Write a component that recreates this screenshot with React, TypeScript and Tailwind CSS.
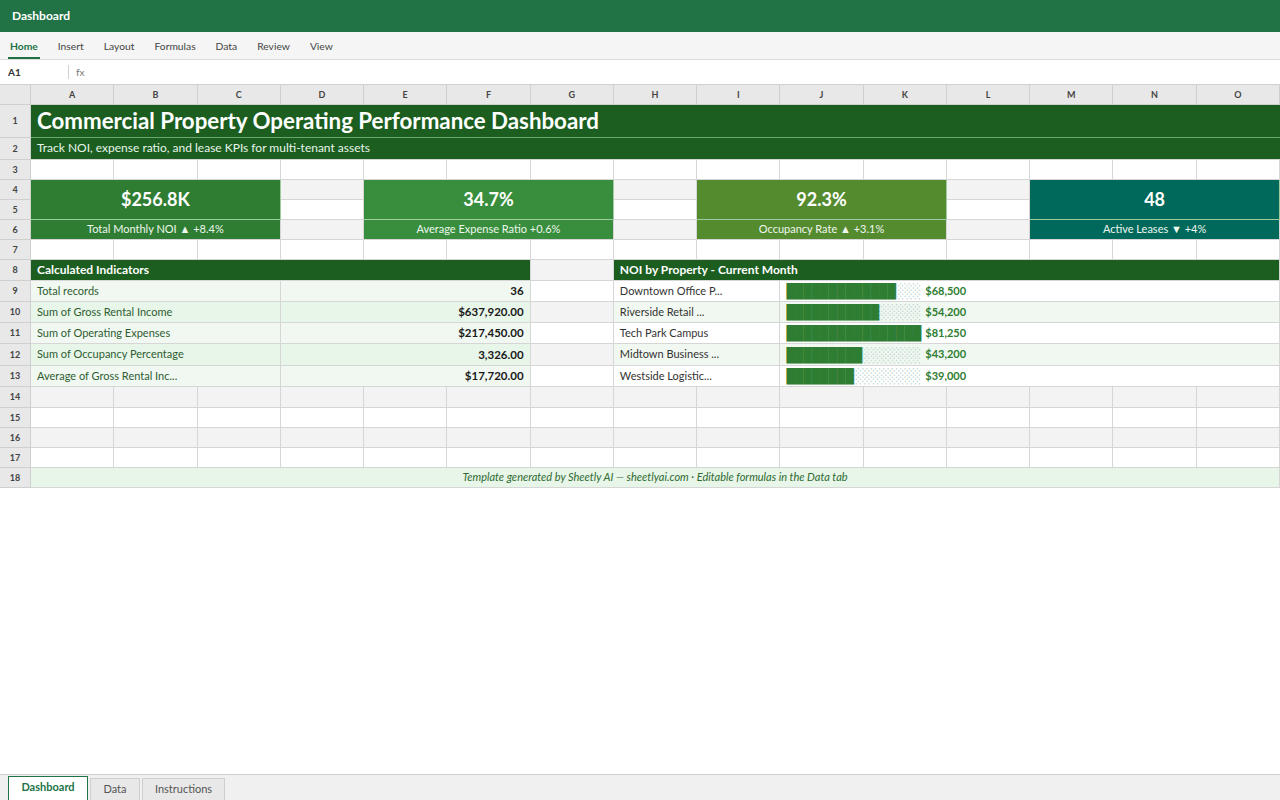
import React from "react";

const COLS = ["A", "B", "C", "D", "E", "F", "G", "H", "I", "J", "K", "L", "M", "N", "O"];
const line = "border-r border-b border-[#d6d6d6]";

const stripe = (r: number) => (r % 2 === 0 ? "bg-[#f3f3f3]" : "bg-white");

function RowHead({ n }: { n: number }) {
  return (
    <div className="flex items-center justify-center border-r border-b border-[#cfcfcf] bg-[#e8e8e8] text-[9px] font-bold text-[#444]">
      {n}
    </div>
  );
}

function Blank({ r }: { r: number }) {
  return <div className={`${line} ${stripe(r)}`} />;
}

function BlankRow({ r }: { r: number }) {
  return (
    <>
      <RowHead n={r} />
      {COLS.map((c) => (
        <Blank key={c} r={r} />
      ))}
    </>
  );
}

const kpis = [
  { value: "$256.8K", label: "Total Monthly NOI ▲ +8.4%", bg: "bg-[#2e7d32]" },
  { value: "34.7%", label: "Average Expense Ratio +0.6%", bg: "bg-[#388e3c]" },
  { value: "92.3%", label: "Occupancy Rate ▲ +3.1%", bg: "bg-[#558b2f]" },
  { value: "48", label: "Active Leases ▼ +4%", bg: "bg-[#00695c]" },
];

const indicators = [
  { label: "Total records", value: "36" },
  { label: "Sum of Gross Rental Income", value: "$637,920.00" },
  { label: "Sum of Operating Expenses", value: "$217,450.00" },
  { label: "Sum of Occupancy Percentage", value: "3,326.00" },
  { label: "Average of Gross Rental Inc...", value: "$17,720.00" },
];

const noi = [
  { name: "Downtown Office P...", amount: 68500 },
  { name: "Riverside Retail ...", amount: 54200 },
  { name: "Tech Park Campus", amount: 81250 },
  { name: "Midtown Business ...", amount: 43200 },
  { name: "Westside Logistic...", amount: 39000 },
];
const maxNoi = 81250;

const tabs = ["Home", "Insert", "Layout", "Formulas", "Data", "Review", "View"];

export default function App() {
  return (
    <div className="flex h-screen flex-col bg-white font-['Lato','Noto_Sans',sans-serif] text-[#222]">
      {/* title bar */}
      <div className="flex h-8 shrink-0 items-center bg-[#217346] px-3 text-[12px] font-bold text-white">
        Dashboard
      </div>

      {/* ribbon tabs */}
      <div className="flex h-7 shrink-0 items-end gap-4 border-b border-[#dcdcdc] bg-[#f5f5f5] px-2 text-[10.3px] text-[#444]">
        {tabs.map((t, i) =>
          i === 0 ? (
            <div key={t} className="border-b-2 border-[#217346] px-[2px] pb-[3px] font-bold text-[#217346]">
              {t}
            </div>
          ) : (
            <div key={t} className="px-[2px] pb-[5px]">
              {t}
            </div>
          )
        )}
      </div>

      {/* formula bar */}
      <div className="flex h-[25px] shrink-0 items-center border-b border-[#d0d0d0] bg-white text-[10px]">
        <div className="w-[68px] pl-2 font-bold text-[#333]">A1</div>
        <div className="h-[14px] w-px bg-[#d0d0d0]" />
        <div className="pl-[7px] text-[#777]">fx</div>
      </div>

      {/* sheet */}
      <div className="flex-1 overflow-hidden">
        <div className="grid grid-cols-[31px_repeat(15,minmax(0,1fr))] grid-rows-[20px_33px_22px_20px_20px_20px_20px_20px_21px_21px_21px_21px_22px_21px_21px_20px_20px_20px_20px]">
          {/* column headers */}
          <div className="border-r border-b border-[#cfcfcf] bg-[#e8e8e8]" />
          {COLS.map((c) => (
            <div
              key={c}
              className="flex items-center justify-center border-r border-b border-[#cfcfcf] bg-[#e8e8e8] text-[9px] font-bold text-[#444]"
            >
              {c}
            </div>
          ))}

          {/* row 1 */}
          <RowHead n={1} />
          <div className="col-span-15 flex items-center border-b border-[#6aa86e] bg-[#1b5e20] pl-[6px] text-[22.3px] font-bold text-white">
            Commercial Property Operating Performance Dashboard
          </div>

          {/* row 2 */}
          <RowHead n={2} />
          <div className="col-span-15 flex items-center border-b border-[#d6d6d6] bg-[#1b5e20] pb-px pl-[6px] text-[12px] text-[#e8f5e9]">
            Track NOI, expense ratio, and lease KPIs for multi-tenant assets
          </div>

          <BlankRow r={3} />

          {/* rows 4-5: KPI values */}
          <RowHead n={4} />
          {kpis.map((k, i) => (
            <React.Fragment key={k.value}>
              <div
                className={`col-span-3 row-span-2 flex items-center justify-center border-r border-b border-[#9ccc9f] ${k.bg} text-[18px] font-bold text-white`}
              >
                {k.value}
              </div>
              {i < 3 && <Blank r={4} />}
            </React.Fragment>
          ))}
          <RowHead n={5} />
          <div className={`col-start-5 ${line} bg-white`} />
          <div className={`col-start-9 ${line} bg-white`} />
          <div className={`col-start-13 ${line} bg-white`} />

          {/* row 6: KPI labels */}
          <RowHead n={6} />
          {kpis.map((k, i) => (
            <React.Fragment key={k.label}>
              <div
                className={`col-span-3 flex items-center justify-center border-r border-b border-[#d6d6d6] ${k.bg} text-[11px] text-[#eef7ee]`}
              >
                {k.label}
              </div>
              {i < 3 && <Blank r={6} />}
            </React.Fragment>
          ))}

          <BlankRow r={7} />

          {/* row 8: section headers */}
          <RowHead n={8} />
          <div className="col-span-6 flex items-center border-r border-b border-[#d6d6d6] bg-[#1b5e20] pl-[6px] text-[12px] font-bold text-white">
            Calculated Indicators
          </div>
          <Blank r={8} />
          <div className="col-span-8 flex items-center border-r border-b border-[#d6d6d6] bg-[#1b5e20] pl-[6px] text-[12px] font-bold text-white">
            NOI by Property - Current Month
          </div>

          {/* rows 9-13 */}
          {indicators.map((ind, i) => {
            const r = 9 + i;
            const p = noi[i];
            const filled = Math.round((p.amount / maxNoi) * 16);
            const indBg = i % 2 === 0 ? "bg-[#f1f8f1]" : "bg-[#e8f5e9]";
            const noiBg = i % 2 === 0 ? "bg-white" : "bg-[#f1f8f1]";
            return (
              <React.Fragment key={ind.label}>
                <RowHead n={r} />
                <div className={`col-span-3 flex items-center ${line} ${indBg} pl-[6px] text-[11px] text-[#2e5d32]`}>
                  {ind.label}
                </div>
                <div
                  className={`col-span-3 flex items-center justify-end ${line} ${indBg} pr-[6px] text-[11.5px] font-bold text-[#1a1a1a]`}
                >
                  {ind.value}
                </div>
                <Blank r={r} />
                <div className={`col-span-2 flex items-center ${line} ${noiBg} pl-[6px] text-[11px] text-[#333]`}>
                  {p.name}
                </div>
                <div className={`col-span-6 flex items-center ${line} ${noiBg} pl-[6px]`}>
                  <span className="whitespace-pre font-['DejaVu_Sans_Mono',monospace] text-[14px] leading-none">
                    <span className="text-[#2e7d32]">{"█".repeat(filled)}</span>
                    <span className="text-[#bcd6cf]">{"░".repeat(16 - filled)}</span>
                  </span>
                  <span className="ml-[4px] text-[11px] font-bold text-[#2e7d32]">
                    ${p.amount.toLocaleString("en-US")}
                  </span>
                </div>
              </React.Fragment>
            );
          })}

          <BlankRow r={14} />
          <BlankRow r={15} />
          <BlankRow r={16} />
          <BlankRow r={17} />

          {/* row 18 */}
          <RowHead n={18} />
          <div className="col-span-15 flex items-center justify-center border-r border-b border-[#d6d6d6] bg-[#e8f5e9] text-[11px] italic text-[#2e6b30]">
            Template generated by Sheetly AI — sheetlyai.com · Editable formulas in the Data tab
          </div>
        </div>
      </div>

      {/* sheet tabs */}
      <div className="flex h-[26px] shrink-0 items-end gap-[2px] border-t border-[#d0d0d0] bg-[#f0f0f0] px-2">
        <div className="flex h-[24px] w-[80px] items-center justify-center border border-b-0 border-[#217346] bg-white pb-[2px] text-[11px] font-bold text-[#217346]">
          Dashboard
        </div>
        <div className="flex h-[22px] w-[50px] items-center justify-center border border-b-0 border-[#cfcfcf] bg-[#e8e8e8] text-[11px] text-[#555]">
          Data
        </div>
        <div className="flex h-[22px] w-[83px] items-center justify-center border border-b-0 border-[#cfcfcf] bg-[#e8e8e8] text-[11px] text-[#555]">
          Instructions
        </div>
      </div>
    </div>
  );
}
